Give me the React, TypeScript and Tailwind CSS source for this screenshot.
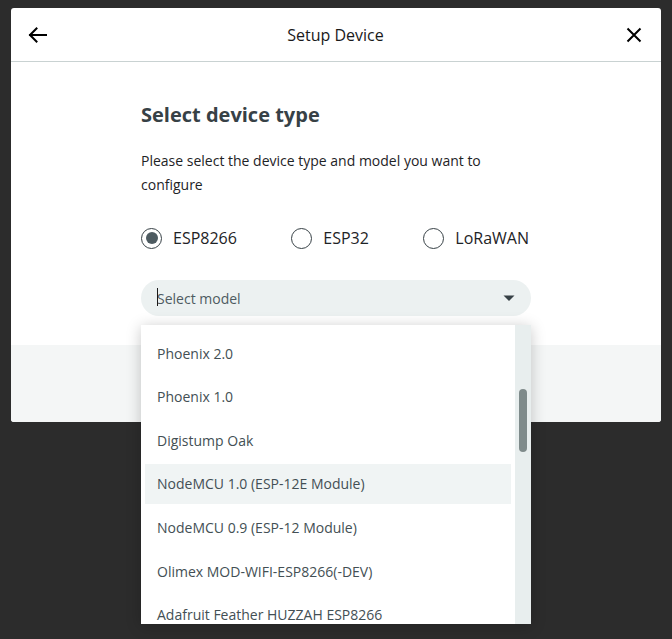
import React from "react";

const items = [
  "Phoenix 2.0",
  "Phoenix 1.0",
  "Digistump Oak",
  "NodeMCU 1.0 (ESP-12E Module)",
  "NodeMCU 0.9 (ESP-12 Module)",
  "Olimex MOD-WIFI-ESP8266(-DEV)",
  "Adafruit Feather HUZZAH ESP8266",
];

function Radio({ label, checked }: { label: string; checked?: boolean }) {
  return (
    <div className="flex items-center gap-[11px]">
      <div className="w-[21px] h-[21px] rounded-full border-[1.5px] border-[#374146] flex items-center justify-center">
        {checked && <div className="w-[12px] h-[12px] rounded-full bg-[#4e5b61]" />}
      </div>
      <span className="text-[16px] leading-6 text-[#1e2326]">{label}</span>
    </div>
  );
}

export default function App() {
  return (
    <div
      className="h-[639px] w-[672px] bg-[#2c2c2c] pt-[8px] pl-[11px] overflow-hidden"
      style={{ fontFamily: '"Open Sans", "Noto Sans", sans-serif' }}
    >
      <div className="w-[650px] bg-white rounded-[3px]">
        {/* Header */}
        <div className="h-[54px] border-b border-[#c9d2d2] flex items-center justify-between px-[14px]">
          <svg width="24" height="24" viewBox="0 0 24 24" fill="none" stroke="#000" strokeWidth="2" strokeLinecap="square" className="mt-[1px]">
            <path d="M21 12H5" />
            <path d="M11.5 5.5L5 12l6.5 6.5" />
          </svg>
          <span className="text-[16px] text-[#1a1a1a]">Setup Device</span>
          <svg width="24" height="24" viewBox="0 0 24 24" fill="none" stroke="#000" strokeWidth="2" className="mr-[1px] mt-[1px]">
            <path d="M5.5 5.5L18.5 18.5M18.5 5.5L5.5 18.5" />
          </svg>
        </div>
        {/* Body */}
        <div className="pt-[39px] pb-[29px]">
          <div className="w-[390px] mx-auto">
            <h2 className="text-[20px] leading-7 font-bold text-[#374146]">Select device type</h2>
            <p className="mt-[20px] text-[14px] leading-6 text-[#1e2326]">
              Please select the device type and model you want to configure
            </p>
            <div className="mt-[29px] flex justify-between pr-[2px]">
              <Radio label="ESP8266" checked />
              <Radio label="ESP32" />
              <Radio label="LoRaWAN" />
            </div>
            <div className="relative mt-[30px]">
              <div className="h-[36px] rounded-full bg-[#ecf1f1] flex items-center justify-between pl-[16px] pr-[16px]">
                <div className="relative flex items-center">
                  <span className="absolute left-0 top-[0px] w-px h-[18px] bg-[#1a1a1a]" />
                  <span className="text-[14px] text-[#4e5b61]">Select model</span>
                </div>
                <svg width="12" height="8" viewBox="0 0 12 8">
                  <path d="M0.5 1.5h11L6 7z" fill="#374146" />
                </svg>
              </div>
              {/* Dropdown */}
              <div className="absolute left-0 top-[45px] w-[390px] h-[299px] bg-white flex shadow-[0_2px_14px_rgba(0,0,0,0.22)] z-10 overflow-hidden">
                <div className="flex-1 flex flex-col gap-[3.67px] pt-[8px] px-[4px] overflow-hidden">
                  {items.map((it, i) => (
                    <div
                      key={it}
                      className={
                        "h-[40px] shrink-0 flex items-center px-[12px] text-[14px] text-[#434f54] " +
                        (i === 3 ? "bg-[#f0f4f4]" : "")
                      }
                    >
                      {it}
                    </div>
                  ))}
                </div>
                <div className="w-[16px] bg-[#e8eeee] pt-[64px] flex justify-center">
                  <div className="w-[8px] h-[63px] rounded-full bg-[#7f8b8b]" />
                </div>
              </div>
            </div>
          </div>
        </div>
        {/* Footer */}
        <div className="h-[77px] bg-[#f4f6f6] rounded-b-[3px]" />
      </div>
    </div>
  );
}
